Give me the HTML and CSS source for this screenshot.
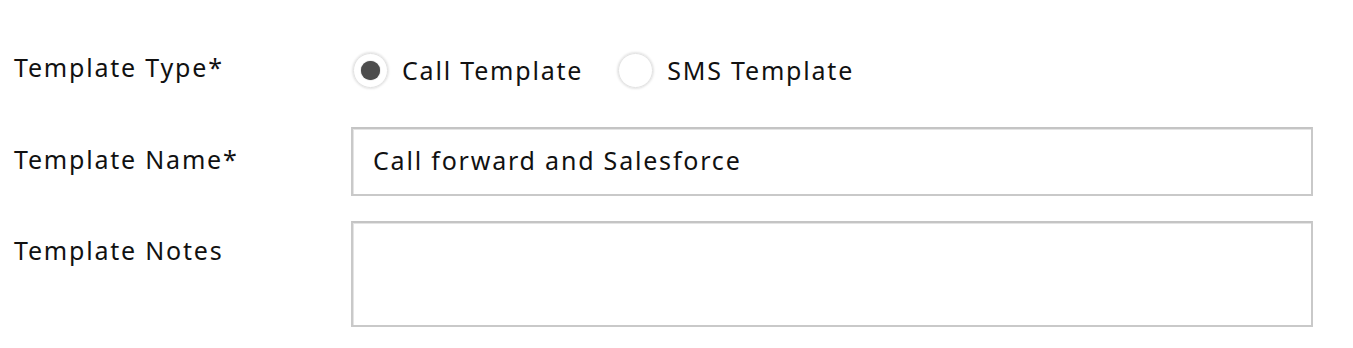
FILE: index.html
```html
<!DOCTYPE html>
<html lang="en">
<head>
  <meta charset="UTF-8">
  <title>Template</title>
  <link rel="stylesheet" href="styles.css">
</head>
<body>

<form class="tpl-form">
  <div class="row row-type">
    <label class="lbl">Template Type*</label>
    <div class="radios">
      <span class="radio on"></span><span class="radio-txt">Call Template</span>
      <span class="radio"></span><span class="radio-txt">SMS Template</span>
    </div>
  </div>

  <div class="row row-name">
    <label class="lbl">Template Name*</label>
    <div class="field">Call forward and Salesforce</div>
  </div>

  <div class="row row-notes">
    <label class="lbl">Template Notes</label>
    <div class="field notes"></div>
  </div>
</form>

</body>
</html>
```

FILE: styles.css
```css
body { margin: 0; background: #fff; color: #111; font-family: "Noto Sans", Lato, sans-serif; font-size: 25px; letter-spacing: 1.8px; }
.tpl-form { padding: 46px 0 0 14px; width: 1299px; }
.row { display: grid; grid-template-columns: 337px 962px; align-items: center; }
.row-type { height: 48px; }
.row-name { margin-top: 33px; }
.row-notes { margin-top: 25px; align-items: start; }
.lbl { line-height: 36px; padding-bottom: 6px; }
.row-notes .lbl { padding-top: 11px; padding-bottom: 0; }
.radios { display: flex; align-items: center; }
.radio {
  width: 35px; height: 35px; border-radius: 50%; box-sizing: border-box;
  border: 1px solid #e2e2e2; box-shadow: 0 0 3px rgba(0,0,0,.22);
  display: flex; align-items: center; justify-content: center; margin-right: 14px; margin-left: 2px;
}
.radio.on::after { content: ""; width: 19px; height: 19px; border-radius: 50%; background: #4c4c4c; box-shadow: 0 0 1px #4c4c4c; }
.radio-txt { margin-right: 33px; }
.field {
  box-sizing: border-box; height: 69px; border: 2px solid #c9c9c9; border-top-color: #c4c4c4;
  box-shadow: inset 1px 1px 0 #e4e4e4;
  padding: 0 20px 4px; display: flex; align-items: center;
}
.field.notes { height: 106px; }
```
